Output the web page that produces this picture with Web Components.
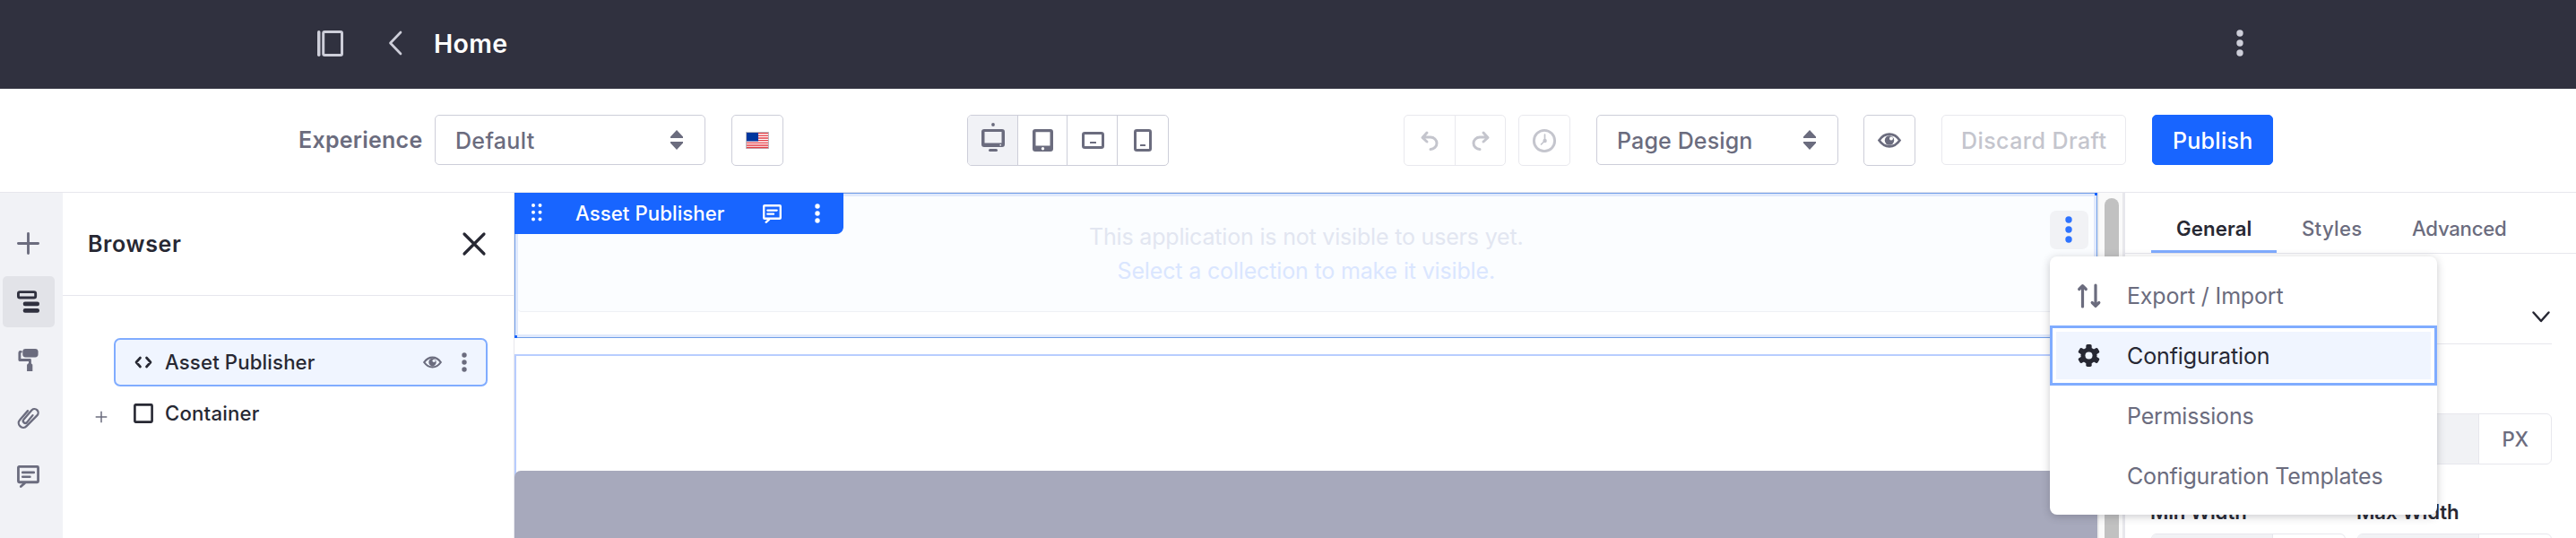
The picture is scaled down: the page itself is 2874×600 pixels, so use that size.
<!DOCTYPE html>
<html lang="en">
<head>
<meta charset="utf-8">
<title>Home</title>
<style>
html,body{margin:0;background:#fff;overflow:hidden}
body{font-family:Inter,"Liberation Sans",sans-serif;color:#6b6c7e}
</style>
</head>
<body>
<page-editor></page-editor>
<script>
const K = (r, d, c) => [-d, 0, d].map(y => `<circle cx="${c}" cy="${c + y}" r="${r}"/>`).join('');
const EYE = `<path d="M1.5 12.5C6 6 10 5.7 13 5.700S20 6 24.500 12.500C20 19 16 19.300 13 19.300S6 19 1.500 12.500Z" fill="none" stroke="currentColor" stroke-width="2.700"/><circle cx="13" cy="12.500" r="5.200"/><circle cx="15" cy="10.400" r="2" fill="var(--hole,#fff)"/>`;
const CHAT = `<path d="M2.500 1.500H23.500a1 1 0 0 1 1 1V18.500a1 1 0 0 1-1 1H2.500a1 1 0 0 1-1-1V2.500a1 1 0 0 1 1-1ZM9 20.500 4.500 24.500" fill="none" stroke="currentColor" stroke-width="2.900" stroke-linecap="round" stroke-linejoin="round"/><path d="M6.500 8.200H19.500M6.500 13.200H15" stroke="currentColor" stroke-width="2.700" stroke-linecap="round"/>`;
/* name: [width, height, markup] */
const ICONS = {
  panel: [29, 29, `<rect x="0" y="0" width="3.500" height="29" rx="1.700"/><rect x="6.700" y="1.500" width="20.800" height="26" rx="1.500" fill="none" stroke="currentColor" stroke-width="3"/>`],
  back: [16, 28, `<path d="M14 2 2.500 14 14 26" fill="none" stroke="currentColor" stroke-width="2.700" stroke-linecap="round" stroke-linejoin="round"/>`],
  kebab: [30, 30, K(3.700, 11, 15)],
  kebabS: [22, 22, K(2.700, 8, 11)],
  updown: [14, 22, `<path d="M7 0 14 7.500V9H0V7.500ZM7 22 0 14.500V13H14V14.500Z"/>`],
  flag: [26, 19, `<rect width="26" height="19" fill="#b9b9c0"/><rect x="1" y="1" width="24" height="17" fill="#fff"/><path d="M1 1.600H25M1 4.300H25M1 7H25M1 9.700H25M1 12.400H25M1 15H25M1 17.500H25" stroke="#e43d45" stroke-width="1.300"/><rect x="1" y="1" width="13" height="9.500" fill="#00379f"/>`],
  desktop: [26, 32, `<circle cx="13" cy="2" r="1.900"/><path d="M3 7H23a3 3 0 0 1 3 3V24a3 3 0 0 1-3 3H3a3 3 0 0 1-3-3V10a3 3 0 0 1 3-3ZM3.500 10V22.500H22.500V10ZM20.500 24v1.500h1.500V24Z" fill-rule="evenodd"/><rect x="8" y="29" width="10" height="3" rx="1.500"/>`],
  tablet: [23, 25, `<path d="M3 0H20a3 3 0 0 1 3 3V22a3 3 0 0 1-3 3H3a3 3 0 0 1-3-3V3a3 3 0 0 1 3-3ZM3.500 3.200V18.500H19.500V3.200Z" fill-rule="evenodd"/><circle cx="11.500" cy="21.800" r="1.700" fill="#fff"/>`],
  land: [25, 19, `<rect x="1.500" y="1.500" width="22" height="16" rx="1.800" fill="none" stroke="currentColor" stroke-width="3"/><rect x="9" y="11" width="7" height="2" rx=".6"/>`],
  phone: [20, 25, `<rect x="1.500" y="1.500" width="17" height="22" rx="1.800" fill="none" stroke="currentColor" stroke-width="3"/><rect x="7" y="17" width="6" height="2" rx=".6"/>`],
  undo: [20, 22, `<path d="M7 2 2 7.500 7 12M2.500 7H11a7 6.700 0 0 1 0 13.400" fill="none" stroke="currentColor" stroke-width="3" stroke-linecap="round" stroke-linejoin="round"/>`],
  redo: [20, 22, `<path d="M13 2 18 7.500 13 12M17.500 7H9a7 6.700 0 0 0 0 13.400" fill="none" stroke="currentColor" stroke-width="3" stroke-linecap="round" stroke-linejoin="round"/>`],
  clock: [26, 26, `<circle cx="13" cy="13" r="11.600" fill="none" stroke="currentColor" stroke-width="2.900"/><path d="M13.500 6V13L9.500 17" fill="none" stroke="currentColor" stroke-width="1.700" stroke-linecap="round"/><circle cx="13.600" cy="13" r="2.200"/>`],
  eye: [26, 25, EYE],
  plus: [26, 26, `<path d="M13 1.500V24.500M1.500 13H24.500" stroke="currentColor" stroke-width="3" stroke-linecap="round"/>`],
  plusS: [14, 14, `<path d="M7 .7V13.300M.7 7H13.300" stroke="currentColor" stroke-width="1.500"/>`],
  tree: [26, 26, `<rect x="1.500" y="1.700" width="20" height="6.600" rx="1.800" fill="none" stroke="currentColor" stroke-width="3"/><rect x="7" y="13" width="19" height="5" rx="2.300"/><rect x="7" y="20.800" width="19" height="5" rx="2.300"/>`],
  roller: [26, 26, `<rect x="6.500" y="0" width="18" height="9.800" rx="3.500"/><path d="M4.500 3.500H4a1 1 0 0 0-1 1V13H15V18" fill="none" stroke="currentColor" stroke-width="3" stroke-linejoin="round" stroke-linecap="round"/><path d="M11.500 26V18.500l1.500-1.500H16.500l1.500 1.500V26Z"/>`],
  clip: [26, 26, `<path d="M12.500 4.300 3.300 14.800a5.200 5.200 0 0 0 7.800 7.200L23.200 9.700a4.200 4.200 0 0 0-6-6.300L7.800 14.300a2.500 2.500 0 0 0 3.600 3.500L18.200 9.500" fill="none" stroke="currentColor" stroke-width="2.400" stroke-linecap="round" stroke-linejoin="round"/>`],
  chat: [26, 26, CHAT],
  close: [26, 26, `<path d="M2 2 24 24M24 2 2 24" stroke="currentColor" stroke-width="3.200" stroke-linecap="round"/>`],
  code: [20, 14, `<path d="M6.500 2 2 7 6.500 12M13.500 2 18 7 13.500 12" fill="none" stroke="currentColor" stroke-width="2.700" stroke-linecap="round" stroke-linejoin="round"/>`],
  box: [22, 22, `<rect x="1.400" y="1.400" width="19.200" height="19.200" rx="1" fill="none" stroke="currentColor" stroke-width="2.600"/>`],
  drag: [14, 22, [3,10.5].map(x => [3,10.700,18.400].map(y => `<circle cx="${x}" cy="${y}" r="2"/>`).join('')).join('')],
  order: [26, 26, `<path d="M5.500 25V2M1.700 5.500 5.500 1.700 9.300 5.500M20 1V24M16.200 20.500 20 24.300 23.800 20.500" fill="none" stroke="currentColor" stroke-width="3.200" stroke-linecap="round" stroke-linejoin="round"/>`],
  gear: [26, 26, `<circle cx="13" cy="13" r="9.400"/>` + [0, 60, 120].map(a => `<rect x="9.700" y="0" width="6.600" height="26" rx="1.800" transform="rotate(${a} 13 13)"/>`).join('') + `<circle cx="13" cy="13" r="4.200" fill="#f0f5ff"/>`],
  down: [20, 13, `<path d="M1.500 1.500 10 11 18.500 1.500" fill="none" stroke="currentColor" stroke-width="2.500" stroke-linecap="round" stroke-linejoin="round"/>`]
};
function define(name, html, init) {
  const t = document.createElement('template');
  t.innerHTML = html;
  customElements.define(name, class extends HTMLElement {
    connectedCallback() {
      if (this.shadowRoot) return;
      this.attachShadow({mode: 'open'}).append(t.content.cloneNode(true));
      if (init) init(this, this.shadowRoot);
    }
  });
}
/* icon drawn from the set above; w/h override the natural size */
define('ui-icon', `<style>:host{display:block;flex:none}svg{display:block;fill:currentColor;overflow:visible}</style><div></div>`, (el, root) => {
  const [w, h, m] = ICONS[el.getAttribute('name')];
  const W = el.getAttribute('w') || w, H = el.getAttribute('h') || h;
  root.querySelector('div').innerHTML = `<svg width="${W}" height="${H}" viewBox="0 0 ${w} ${h}" preserveAspectRatio="none">${m}</svg>`;
});
/* single-line label whose tracking fills the given width */
define('ui-text', `<style>:host{display:block;flex:none;white-space:nowrap;line-height:30px}span{display:inline-block}</style><span><slot></slot></span>`, (el, root) => {
  el.style.fontSize = (el.getAttribute('size') || 25) + 'px';
  el.style.fontWeight = el.getAttribute('weight') || 400;
  const w = +el.getAttribute('w'), s = root.querySelector('span');
  el.style.width = w + 'px';
  const n = el.textContent.length;
  s.style.letterSpacing = ((w + 2.5 - s.getBoundingClientRect().width) / n).toFixed(3) + 'px';
  s.style.marginLeft = '-1px';
});
define('ui-button', `<style>:host{display:flex;box-sizing:border-box;flex:none;align-items:center;justify-content:center;height:57px;width:58px;border:1px solid #cdced9;border-radius:5px;background:#fff}:host([dim]){border-color:#e9e9ee;color:#c4c5cd}:host([primary]){background:#1865ff;border-color:#1865ff;color:#fff}:host([text]){height:56px}</style><slot></slot>`);
define('ui-select', `<style>:host{display:flex;box-sizing:border-box;flex:none;align-items:center;justify-content:space-between;height:56px;border:1px solid #cdced9;border-radius:5px;padding:0 24px 0 23px}</style><slot></slot><ui-icon name="updown"></ui-icon>`);
define('ui-group', `<style>:host{display:flex;box-sizing:border-box;flex:none;height:57px;border:1px solid #cdced9;border-radius:5px;overflow:hidden}:host([dim]){border-color:#e9e9ee;color:#c4c5cd}::slotted(*){display:flex;align-items:center;justify-content:center;border-left:1px solid #cdced9;box-sizing:border-box}:host([dim]) ::slotted(*){border-color:#e9e9ee}::slotted(:first-child){border-left:0!important}::slotted([on]){background:#f1f2f6}</style><slot></slot>`);
define('top-bar', `<style>:host{display:flex;box-sizing:border-box;height:99px;background:#30313f;color:#cdced9;align-items:center;padding:0 356px 3px 354px}.b{margin-left:50px}ui-text{margin-left:36px;color:#fff}.k{margin-left:auto;margin-right:4px}</style>
<ui-icon name="panel"></ui-icon><ui-icon class="b" name="back"></ui-icon><ui-text style="margin-top:2px" size="28.500" weight="600" w="80">Home</ui-text><ui-icon class="k" name="kebab"></ui-icon>`);
define('tool-bar', `<style>:host{display:flex;box-sizing:border-box;height:116px;border-bottom:1px solid #e7e7ed;padding:29px 338px 0 334px;align-items:flex-start}
.t{margin-top:13px}ui-icon{flex:none}ui-button ui-text,ui-select ui-text{padding-top:1px}</style>
<ui-text class="t" weight="600" w="136">Experience</ui-text>
<ui-select style="width:302px;margin-left:15px"><ui-text weight="500" w="86">Default</ui-text></ui-select>
<ui-button style="margin-left:29px"><ui-icon name="flag"></ui-icon></ui-button>
<ui-group style="margin-left:205px;width:225px"><div on style="width:55px"><ui-icon name="desktop" style="margin-bottom:7px"></ui-icon></div><div style="width:55px"><ui-icon name="tablet"></ui-icon></div><div style="width:56px"><ui-icon name="land" style="margin-left:1px"></ui-icon></div><div style="width:57px"><ui-icon name="phone"></ui-icon></div></ui-group>
<ui-group dim style="margin-left:262px;width:114px"><div style="width:56px"><ui-icon name="undo"></ui-icon></div><div style="width:56px"><ui-icon name="redo"></ui-icon></div></ui-group>
<ui-button dim style="margin-left:14px"><ui-icon name="clock"></ui-icon></ui-button>
<ui-select style="width:270px;margin-left:29px"><ui-text weight="500" w="149">Page Design</ui-text></ui-select>
<ui-button style="margin-left:28px"><ui-icon name="eye"></ui-icon></ui-button>
<ui-button dim text style="width:206px;margin-left:29px"><ui-text weight="500" w="160">Discard Draft</ui-text></ui-button>
<ui-button primary text style="width:135px;margin-left:29px"><ui-text weight="500" w="87">Publish</ui-text></ui-button>`);
define('side-rail', `<style>:host{display:flex;flex-direction:column;width:70px;box-sizing:border-box;flex:none;background:#f1f2f6;padding:28px 0 0 3px;gap:8px}div{width:58px;height:57px;display:flex;align-items:center;justify-content:center;border-radius:5px;padding-right:1px;box-sizing:border-box}.on{background:#e2e3e8;color:#30313f}</style>
<div><ui-icon name="plus" w="25" h="25"></ui-icon></div><div class="on"><ui-icon name="tree" w="25" h="25"></ui-icon></div><div><ui-icon name="roller" w="25" h="25"></ui-icon></div><div><ui-icon name="clip" w="25" h="25"></ui-icon></div><div><ui-icon name="chat" w="25" h="25"></ui-icon></div>`);
define('tree-item', `<style>:host{display:flex;align-items:center;box-sizing:border-box;height:54px;margin-left:57px;width:417px;border:2px solid transparent;border-radius:7px;color:#272833;padding-left:20px}:host([on]){border-color:#80acff;background:#f0f5ff;--hole:#f0f5ff}.i{width:22px;display:flex;justify-content:center;margin-right:14px}.a{display:flex;margin-left:auto;color:#6b6c7e;gap:14px;align-items:center;padding-right:13px}</style><div class="i"><slot name="icon"></slot></div><slot></slot><div class="a"><slot name="action"></slot></div>`);
define('browser-panel', `<style>:host{display:block;box-sizing:border-box;width:504px;flex:none;border-right:1px solid #e7e7ed}header{display:flex;box-sizing:border-box;height:115px;border-bottom:1px solid #e7e7ed;align-items:center;justify-content:space-between;padding:0 31px 0 29px;color:#272833}.list{padding-top:47px}.row{position:relative}.x{position:absolute;left:36px;top:24px}</style>
<header><ui-text weight="600" w="102">Browser</ui-text><ui-icon name="close"></ui-icon></header>
<div class="list"><tree-item on><ui-icon slot="icon" name="code"></ui-icon><ui-text size="22.200" weight="500" w="165">Asset Publisher</ui-text><ui-icon slot="action" name="eye" w="21" h="20"></ui-icon><ui-icon slot="action" name="kebabS"></ui-icon></tree-item>
<div class="row" style="margin-top:3px"><ui-icon class="x" name="plusS"></ui-icon><tree-item><ui-icon slot="icon" name="box"></ui-icon><ui-text size="22.200" weight="500" w="103">Container</ui-text></tree-item></div></div>`);
define('page-canvas', `<style>:host{display:block;width:1766px;flex:none;overflow:hidden}
.f{position:relative;box-sizing:border-box;height:162px;border:1px solid #709ee8;box-shadow:inset 0 0 0 3px #e0e9fc}
.in{margin:3px 3px 0;height:128px;box-sizing:content-box;background:#fbfdff;border-bottom:1px solid #eef0f5;border-radius:0 0 4px 4px;display:flex;flex-direction:column;align-items:center;padding-top:0}
.in ui-text{line-height:38px}.tab{position:absolute;left:-1px;top:-1px;width:367px;height:46px;background:#1865ff;color:#fff;border-radius:0 0 8px 0;display:flex;align-items:center;box-sizing:border-box;padding-left:18px}
.k{position:absolute;right:9px;top:19px;width:43px;height:43px;border-radius:7px;background:#f1f2f5;color:#2e73ff;display:flex;align-items:center;justify-content:center;padding:0 1px 1px 0;box-sizing:border-box}
.c{position:absolute;width:3px;height:3px;background:#1865ff}
.g{margin-top:18px;height:200px;box-sizing:border-box;border:2px solid #b8cdff}.b{margin:128px -2px 0;height:80px;background:#a7a9bc;border-radius:7px 7px 0 0}</style>
<div class="f"><div class="in"><ui-text style="margin-top:25.5px;color:#e2e6f1" w="482">This application is not visible to users yet.</ui-text><ui-text style="color:#dae6ff" w="419">Select a collection to make it visible.</ui-text></div>
<div class="c" style="right:-1px;top:-1px"></div><div class="c" style="left:-1px;bottom:-1px"></div>
<div class="tab"><ui-icon name="drag" style="margin-top:-2px"></ui-icon><ui-text style="margin-left:37px;margin-top:-1px" size="22.200" weight="500" w="164">Asset Publisher</ui-text><ui-icon name="chat" w="21" h="21" style="margin-left:44px"></ui-icon><ui-icon name="kebabS" style="margin-left:29px"></ui-icon></div>
<div class="k"><ui-icon name="kebab"></ui-icon></div></div>
<div class="g"><div class="b"></div></div>`);
define('scroll-track', `<style>:host{display:block;box-sizing:border-box;width:30px;flex:none;background:#fafafa;border-left:2px solid #ececec;border-right:2px solid #e8e8ec;padding:6px 4px 0 6px}div{width:16px;height:500px;border-radius:8px;background:#c1c1c1}</style><div></div>`);
define('unit-input', `<style>:host{display:flex;box-sizing:border-box;height:57px;border:1px solid #e7e7ed;border-radius:6px;overflow:hidden}.v{flex:1;background:#f1f2f5;border-right:1px solid #e7e7ed}.u{width:80px;display:flex;align-items:center;justify-content:center}</style><div class="v"></div><div class="u"><slot></slot></div>`);
define('config-panel', `<style>:host{display:block;flex:1;border-left:1px solid #e7e7ed;box-sizing:border-box;min-width:0}
nav{display:flex;box-sizing:border-box;height:68px;border-bottom:1px solid #e7e7ed;padding-left:29px}nav div{height:67px;box-sizing:border-box;padding:25px 29px 0;border-bottom:3px solid transparent}nav .on{border-color:#80acff;color:#272833}
section{margin:0 27px 0 29px}.h{height:100px;border-bottom:1px solid #e7e7ed;display:flex;justify-content:flex-end;align-items:flex-end;box-sizing:content-box}.h ui-icon{margin:0 2px 23px}.two{display:grid;grid-template-columns:217px 217px;gap:13px;margin-top:38px;color:#272833}.two unit-input{margin-top:9px}</style>
<nav><div class="on"><ui-text size="22.200" weight="600" w="82">General</ui-text></div><div><ui-text size="22.200" weight="500" w="65">Styles</ui-text></div><div><ui-text size="22.200" weight="500" w="103">Advanced</ui-text></div></nav>
<section><div class="h"><ui-icon name="down" style="color:#272833"></ui-icon></div><unit-input style="margin-top:77px"><ui-text size="22.200" weight="500" w="27">PX</ui-text></unit-input>
<div class="two"><div><ui-text size="22.200" weight="600" w="105">Min Width</ui-text><unit-input></unit-input></div><div><ui-text size="22.200" weight="600" w="112">Max Width</ui-text><unit-input></unit-input></div></div></section>`);
define('menu-item', `<style>:host{display:flex;align-items:center;height:67px;box-sizing:border-box;padding-left:31px}.i{width:26px;margin-right:30px}::slotted(ui-text){padding-top:1px}:host([on]){color:#272833;border:3px solid #80acff;padding-left:28px;background:#f0f5ff;box-shadow:inset 0 0 0 4px #fff}</style><div class="i"><slot name="icon"></slot></div><slot></slot>`);
define('drop-menu', `<style>:host{display:block;position:absolute;left:2287px;top:286px;width:432px;height:288px;box-sizing:border-box;padding-top:10px;background:#fff;border-radius:8px;box-shadow:0 2px 10px rgba(39,40,51,.25)}</style>
<menu-item><ui-icon slot="icon" name="order"></ui-icon><ui-text w="172">Export / Import</ui-text></menu-item>
<menu-item on><ui-icon slot="icon" name="gear" w="25" h="25"></ui-icon><ui-text w="157">Configuration</ui-text></menu-item>
<menu-item><ui-text w="139">Permissions</ui-text></menu-item>
<menu-item><ui-text w="283">Configuration Templates</ui-text></menu-item>`);
define('page-editor', `<style>:host{display:block;position:relative;width:2874px;height:600px;overflow:hidden;background:#fff}main{display:flex;height:385px}</style>
<top-bar></top-bar><tool-bar></tool-bar><main><side-rail></side-rail><browser-panel></browser-panel><page-canvas></page-canvas><scroll-track></scroll-track><config-panel></config-panel></main><drop-menu></drop-menu>`);
</script>
</body>
</html>
